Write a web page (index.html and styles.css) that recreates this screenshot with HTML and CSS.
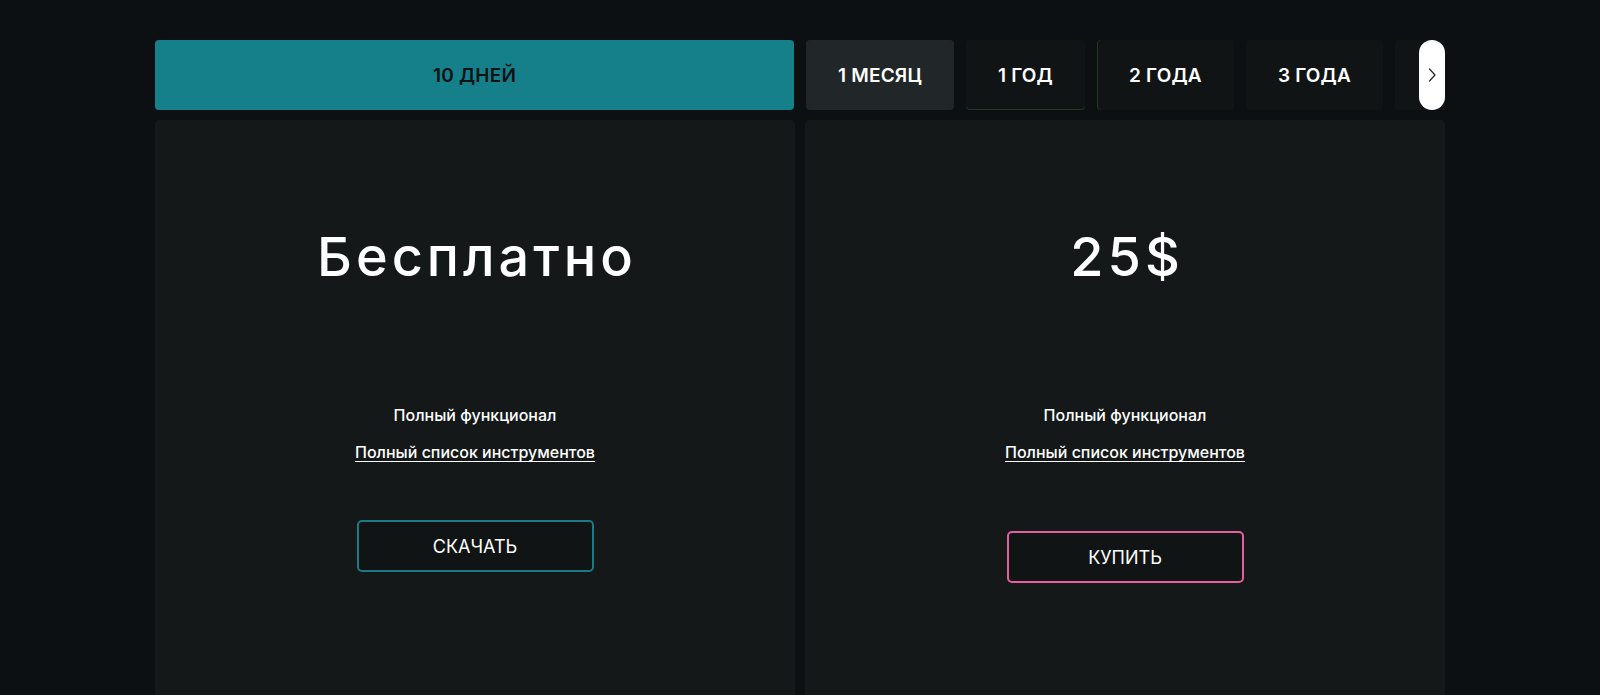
FILE: index.html
```html
<!DOCTYPE html>
<html lang="ru">
<head>
<meta charset="utf-8">
<title>Тарифы</title>
<link rel="stylesheet" href="styles.css">
</head>
<body>
<div class="page">
  <div class="tabs">
    <div class="tabs-track">
      <button class="tab tab-active">10 ДНЕЙ</button>
      <button class="tab tab-hover">1 МЕСЯЦ</button>
      <button class="tab tab-line-b">1 ГОД</button>
      <button class="tab tab-line-l">2 ГОДА</button>
      <button class="tab">3 ГОДА</button>
      <span class="tab tab-peek"></span>
    </div>
    <button class="tabs-next" aria-label="Далее">
      <svg width="10" height="16" viewBox="0 0 10 16"><path d="M2.5 2 L8 8 L2.5 14" fill="none" stroke="#2a2d30" stroke-width="1.3" stroke-linecap="round" stroke-linejoin="round"/></svg>
    </button>
  </div>
  <div class="cards">
    <div class="card">
      <div class="price">Бесплатно</div>
      <div class="feature">Полный функционал</div>
      <a class="feature-link" href="#">Полный список инструментов</a>
      <button class="btn btn-teal">СКАЧАТЬ</button>
    </div>
    <div class="card">
      <div class="price">25$</div>
      <div class="feature">Полный функционал</div>
      <a class="feature-link" href="#">Полный список инструментов</a>
      <button class="btn btn-pink">КУПИТЬ</button>
    </div>
  </div>
</div>
</body>
</html>
```

FILE: styles.css
```css
html, body {
  margin: 0;
  padding: 0;
  background: #0d1012;
  height: 100%;
  overflow: hidden;
}
body {
  font-family: Inter, "Noto Sans", sans-serif;
  color: #ffffff;
}
.page {
  width: 1290px;
  margin: 0 auto;
  padding-top: 40px;
}
.tabs {
  position: relative;
  height: 70px;
  overflow: hidden;
}
.tabs-track {
  display: flex;
  gap: 12px;
  height: 70px;
}
.tab {
  flex: 0 0 auto;
  height: 70px;
  padding: 0 32px;
  border: none;
  border-radius: 4px;
  background: #111415;
  color: #ffffff;
  font-family: Inter, "Noto Sans", sans-serif;
  font-weight: 600;
  font-size: 19px;
  letter-spacing: 0.2px;
  cursor: pointer;
  box-sizing: border-box;
}
.tab-active {
  flex: 0 0 639px;
  background: #16808a;
  color: #0c1113;
}
.tab-hover {
  background: #212628;
}
.tab-line-b {
  box-shadow: inset 0 -1px 0 #1f3b22;
}
.tab-line-l {
  box-shadow: inset 1px 0 0 #1f3b22;
}
.tab-peek {
  display: block;
  width: 120px;
}
.tabs-next {
  position: absolute;
  right: 0;
  top: 0;
  width: 26px;
  height: 70px;
  border: none;
  border-radius: 13px;
  background: #ffffff;
  padding: 0;
  display: flex;
  align-items: center;
  justify-content: center;
  cursor: pointer;
}
.cards {
  display: grid;
  grid-template-columns: 1fr 1fr;
  gap: 10px;
  margin-top: 10px;
}
.card {
  background: #141819;
  border-radius: 5px;
  min-height: 620px;
  display: flex;
  flex-direction: column;
  align-items: center;
  padding-top: 111px;
  box-sizing: border-box;
}
.price {
  font-size: 54px;
  line-height: 52px;
  font-weight: 500;
  letter-spacing: 4px;
  padding-left: 4px;
}
.feature {
  margin-top: 122px;
  font-size: 16px;
  line-height: 20px;
  font-weight: 500;
}
.feature-link {
  margin-top: 17px;
  font-size: 16px;
  line-height: 20px;
  font-weight: 500;
  color: #ffffff;
  text-decoration: underline;
  text-underline-offset: 3px;
}
.btn {
  width: 237px;
  height: 52px;
  margin-top: 58px;
  background: #111415;
  border-radius: 5px;
  color: #ffffff;
  font-family: Inter, "Noto Sans", sans-serif;
  font-size: 18px;
  font-weight: 400;
  cursor: pointer;
}
.btn-teal {
  border: 2px solid #1d7a84;
}
.btn-pink {
  border: 2px solid #e2609e;
  margin-top: 69px;
}
```
